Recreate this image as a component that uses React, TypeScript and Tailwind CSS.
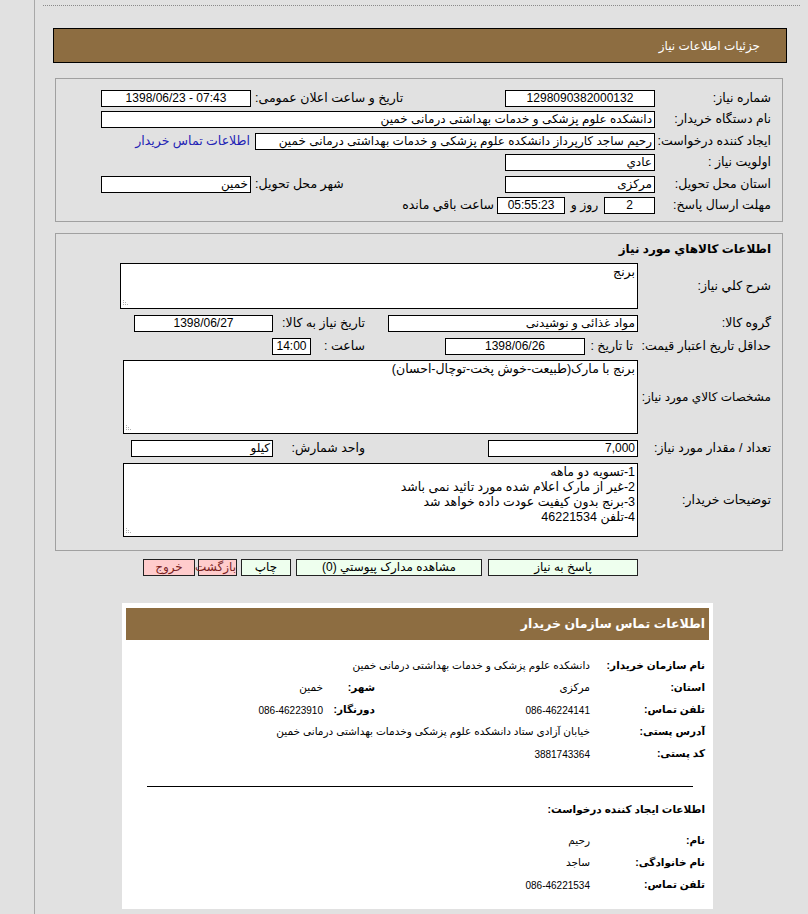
import React from "react";

const F = "font-['Liberation_Sans','DejaVu_Sans',sans-serif]";

function Box({
  w,
  children,
  center,
  className = "",
}: {
  w: string;
  children?: React.ReactNode;
  center?: boolean;
  className?: string;
}) {
  return (
    <div
      className={`${w} h-[17px] shrink-0 border border-black bg-white px-[2px] text-[12px] leading-[15px] whitespace-nowrap overflow-hidden ${
        center ? "text-center" : "text-right"
      } ${className}`}
    >
      {children}
    </div>
  );
}

function Grip() {
  return (
    <svg className="absolute left-[2px] bottom-[2px]" width="8" height="8" viewBox="0 0 8 8">
      <g fill="#b0b0b0">
        <rect x="0" y="6" width="1" height="1" />
        <rect x="2" y="6" width="1" height="1" />
        <rect x="4" y="6" width="1" height="1" />
        <rect x="0" y="4" width="1" height="1" />
        <rect x="2" y="4" width="1" height="1" />
        <rect x="0" y="2" width="1" height="1" />
      </g>
    </svg>
  );
}

function Area({ w, h, children }: { w: string; h: string; children?: React.ReactNode }) {
  return (
    <div
      className={`${w} ${h} relative shrink-0 border border-black bg-white px-[2px] pt-[1px] text-[12.5px] leading-[15px] text-right`}
    >
      {children}
      <Grip />
    </div>
  );
}

function Row1({ h, children }: { h: string; children: React.ReactNode }) {
  return <div className={`flex ${h} items-center`}>{children}</div>;
}

function L1({ children }: { children: React.ReactNode }) {
  return <div className="w-[116px] shrink-0 text-right whitespace-nowrap">{children}</div>;
}

function Btn({
  w,
  children,
  red,
  className = "",
}: {
  w: string;
  children: React.ReactNode;
  red?: boolean;
  className?: string;
}) {
  return (
    <div
      className={`${w} h-[17px] shrink-0 border border-[#222] text-center text-[12px] leading-[15px] whitespace-nowrap ${
        red ? "bg-[#ffcccc] text-[#7a1f1f]" : "bg-[#eeffee] text-black"
      } ${className}`}
    >
      {children}
    </div>
  );
}

function CardRow({
  label,
  value,
  num,
  label2,
  value2,
  num2,
}: {
  label: string;
  value: string;
  num?: boolean;
  label2?: string;
  value2?: string;
  num2?: boolean;
}) {
  return (
    <div className="flex h-[22px] items-center">
      <div className="w-[115px] shrink-0 text-right text-[10.5px] font-bold whitespace-nowrap">{label}</div>
      <div className={`w-[215px] shrink-0 text-right whitespace-nowrap ${num ? "text-[10px]" : "text-[10.5px]"}`}>
        {value}
      </div>
      {label2 !== undefined && (
        <>
          <div className="w-[52px] shrink-0 text-right text-[10.5px] font-bold whitespace-nowrap">{label2}</div>
          <div className={`text-right whitespace-nowrap ${num2 ? "text-[10px]" : "text-[10.5px]"}`}>{value2}</div>
        </>
      )}
    </div>
  );
}

export default function App() {
  return (
    <div className={`flex h-[914px] w-[808px] overflow-hidden bg-[#e1e1e1] text-black ${F}`}>
      <div className="w-[34px] shrink-0" />
      <div className="w-[774px] shrink-0 border-l border-[#a8a8a8]" dir="rtl">
        {/* dotted line */}
        <div className="mt-[5px] mr-[8px] ml-[8px] border-t border-dotted border-[#8a8a8a]" />

        {/* header */}
        <div className="mt-[22px] mr-[21px] ml-[18px] flex h-[35px] items-center border border-black bg-[#8d6d41] pr-[26px] text-[12px] text-white">
          جزئیات اطلاعات نیاز
        </div>

        {/* panel 1 */}
        <div className="mt-[15px] mr-[25px] ml-[20px] border border-[#a0a0a0] pt-[8px] pb-[5px] pr-[11px] text-[12.5px]">
          <Row1 h="h-[22px]">
            <L1>شماره نیاز:</L1>
            <Box w="w-[150px]" center>
              1298090382000132
            </Box>
            <div className="w-[254px] shrink-0 pl-[4px] text-left whitespace-nowrap">تاریخ و ساعت اعلان عمومی:</div>
            <Box w="w-[150px]" center>
              <span dir="ltr">1398/06/23 - 07:43</span>
            </Box>
          </Row1>
          <Row1 h="h-[21px]">
            <L1>نام دستگاه خریدار:</L1>
            <Box w="w-[554px]">دانشکده علوم پزشکی و خدمات بهداشتی درمانی خمین</Box>
          </Row1>
          <Row1 h="h-[22px]">
            <L1>ایجاد کننده درخواست:</L1>
            <Box w="w-[400px]">رحیم ساجد کارپرداز دانشکده علوم پزشکی و خدمات بهداشتی درمانی خمین</Box>
            <div className="mr-[5px] whitespace-nowrap text-[#2323b5]">اطلاعات تماس خریدار</div>
          </Row1>
          <Row1 h="h-[21px]">
            <L1>اولویت نیاز :</L1>
            <Box w="w-[150px]">عادي</Box>
          </Row1>
          <Row1 h="h-[22px]">
            <L1>استان محل تحویل:</L1>
            <Box w="w-[150px]">مرکزی</Box>
            <div className="w-[254px] shrink-0 pl-[4px] text-left whitespace-nowrap">شهر محل تحویل:</div>
            <Box w="w-[150px]">خمین</Box>
          </Row1>
          <Row1 h="h-[21px]">
            <L1>مهلت ارسال پاسخ:</L1>
            <Box w="w-[51px]" center>
              2
            </Box>
            <div className="w-[39px] shrink-0 text-center whitespace-nowrap">روز و</div>
            <Box w="w-[68px]" center>
              05:55:23
            </Box>
            <div className="mr-[3px] whitespace-nowrap">ساعت باقي مانده</div>
          </Row1>
        </div>

        {/* panel 2 */}
        <div className="mt-[11px] mr-[25px] ml-[20px] border border-[#a0a0a0] pt-[5px] pb-[13px] pr-[11px] text-[12.5px]">
          <div className="flex h-[20px] items-center text-[12px] font-bold">اطلاعات كالاهاي مورد نياز</div>

          <div className="mt-[4px] flex items-center">
            <div className="w-[133px] shrink-0 text-right">شرح كلي نياز:</div>
            <Area w="w-[518px]" h="h-[46px]">
              برنج
            </Area>
          </div>

          <div className="mt-[6px] flex h-[17px] items-center">
            <div className="w-[133px] shrink-0 text-right">گروه کالا:</div>
            <Box w="w-[250px]">مواد غذائی و نوشیدنی</Box>
            <div className="w-[111px] shrink-0 pr-[23px] text-right whitespace-nowrap">تاریخ نیاز به کالا:</div>
            <Box w="w-[139px]" center className="mr-[4px]">
              1398/06/27
            </Box>
          </div>

          <div className="mt-[6px] flex h-[17px] items-center">
            <div className="w-[133px] shrink-0 text-right whitespace-nowrap">حداقل تاریخ اعتبار قیمت:</div>
            <div className="w-[53px] shrink-0 pr-[5px] text-right whitespace-nowrap">تا تاریخ :</div>
            <Box w="w-[140px]" center>
              1398/06/26
            </Box>
            <div className="w-[57px] shrink-0" />
            <div className="w-[77px] shrink-0 pr-[23px] text-right whitespace-nowrap">ساعت :</div>
            <Box w="w-[39px]" center>
              14:00
            </Box>
          </div>

          <div className="mt-[5px] flex items-center">
            <div className="w-[133px] shrink-0 text-right text-[12px] whitespace-nowrap">مشخصات كالاي مورد نياز:</div>
            <Area w="w-[515px]" h="h-[74px]">
              برنج با مارک(طبیعت-خوش پخت-توچال-احسان)
            </Area>
          </div>

          <div className="mt-[6px] flex h-[17px] items-center">
            <div className="w-[133px] shrink-0 text-right whitespace-nowrap">تعداد / مقدار مورد نیاز:</div>
            <Box w="w-[150px]">7,000</Box>
            <div className="w-[100px] shrink-0" />
            <div className="w-[111px] shrink-0 pr-[23px] text-right whitespace-nowrap">واحد شمارش:</div>
            <Box w="w-[142px]" className="mr-[4px]">
              کیلو
            </Box>
          </div>

          <div className="mt-[6px] flex items-center">
            <div className="w-[133px] shrink-0 text-right">توضيحات خريدار:</div>
            <Area w="w-[515px]" h="h-[74px]">
              <div>1-تسویه دو ماهه</div>
              <div>2-غیر از مارک اعلام شده مورد تائید نمی باشد</div>
              <div>3-برنج بدون کیفیت عودت داده خواهد شد</div>
              <div>4-تلفن 46221534</div>
            </Area>
          </div>
        </div>

        {/* buttons */}
        <div className="mt-[8px] mr-[170px] flex">
          <Btn w="w-[150px]">پاسخ به نیاز</Btn>
          <Btn w="w-[186px]" className="mr-[6px]">
            مشاهده مدارک پیوستي (0)
          </Btn>
          <Btn w="w-[50px]" className="mr-[5px]">
            چاپ
          </Btn>
          <Btn w="w-[39px]" red className="mr-[4px]">
            بازگشت
          </Btn>
          <Btn w="w-[52px]" red className="mr-[3px]">
            خروج
          </Btn>
        </div>

        {/* contact card */}
        <div className="mt-[27px] mr-[95px] w-[591px] bg-white px-[4px] pt-[5px] pb-[13px]">
          <div className="flex h-[32px] items-center bg-[#8d6d41] pr-[4px] text-[12.5px] font-bold text-white">
            اطلاعات تماس سازمان خريدار
          </div>
          <div className="mt-[15px] pr-[4px]">
            <CardRow label="نام سازمان خریدار:" value="دانشکده علوم پزشکی و خدمات بهداشتی درمانی خمین" />
            <CardRow label="استان:" value="مرکزی" label2="شهر:" value2="خمین" />
            <CardRow
              label="تلفن تماس:"
              value="086-46224141"
              num
              label2="دورنگار:"
              value2="086-46223910"
              num2
            />
            <CardRow label="آدرس پستی:" value="خیابان آزادی ستاد دانشکده علوم پزشکی وخدمات بهداشتی درمانی خمین" />
            <CardRow label="کد پستی:" value="3881743364" num />
          </div>
          <div className="mt-[21px] mr-[16px] ml-[21px] border-t border-black" />
          <div className="mt-[12px] flex h-[22px] items-center pr-[4px] text-[10.5px] font-bold">
            اطلاعات ایجاد کننده درخواست:
          </div>
          <div className="mt-[9px] pr-[4px]">
            <CardRow label="نام:" value="رحیم" />
            <CardRow label="نام خانوادگی:" value="ساجد" />
            <CardRow label="تلفن تماس:" value="086-46221534" num />
          </div>
        </div>
      </div>
    </div>
  );
}
